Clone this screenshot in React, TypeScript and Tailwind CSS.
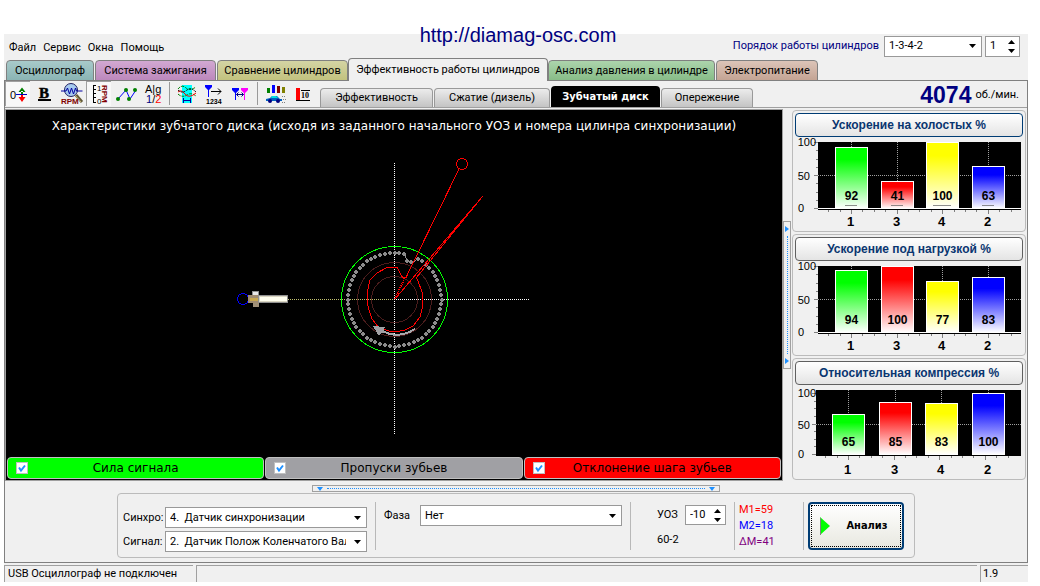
import type { ReactNode } from 'react';

type Bar = { cylinder: number; value: number; left: number };

type ChartProps = {
  title: string;
  bars: Bar[];
  plotLeft: number;
  zeroY: number;
  topY: number;
  active?: boolean;
  marks?: boolean;
  whiteAxis?: boolean;
};

const CENTER = { x: 394.5, y: 299.5 };

const gradients = ['#00ff00', '#ff0000', '#ffff00', '#0000ff'];

const wideBars = [40, 86, 131, 177];

const teeth = Array.from({ length: 60 }, (_, i) => {
  const inner = i === 3 || i === 4;
  const radius = inner ? 41 : 47;
  const angle = (i * 6 * Math.PI) / 180;
  return {
    x: Math.round(CENTER.x + radius * Math.sin(angle)),
    y: Math.round(CENTER.y - radius * Math.cos(angle)),
  };
});

function Caret({ up = false }: { up?: boolean }) {
  return (
    <svg width="7" height="4" viewBox="0 0 7 4" className="block" aria-hidden="true">
      <path d={up ? 'M0 4h7L3.5 0z' : 'M0 0h7L3.5 4z'} fill="#000" />
    </svg>
  );
}

function Combo({ id, value, className }: { id: string; value: string; className: string }) {
  return (
    <div className={`relative h-[21px] ${className}`}>
      <select
        id={id}
        defaultValue={value}
        className="h-full w-full appearance-none overflow-hidden border border-[#999] bg-white pr-5 pl-1 text-black outline-none"
      >
        <option value={value}>{value}</option>
      </select>
      <span className="pointer-events-none absolute inset-y-0 right-1.5 flex items-center">
        <Caret />
      </span>
    </div>
  );
}

function Spinner({ id, label, value, className }: { id: string; label: string; value: string; className: string }) {
  return (
    <div className={`flex items-center border border-[#999] bg-white pr-1 ${className}`}>
      <input id={id} aria-label={label} defaultValue={value} className="w-full min-w-0 flex-1 bg-white pl-1 outline-none" />
      <div className="flex flex-col gap-[5px]">
        <button type="button" aria-label="Больше"><Caret up /></button>
        <button type="button" aria-label="Меньше"><Caret /></button>
      </div>
    </div>
  );
}

function ToolButton({ label, pressed = false, children }: { label: string; pressed?: boolean; children: ReactNode }) {
  return (
    <button
      type="button"
      aria-label={label}
      className={`flex h-[25px] w-[25px] items-center justify-center ${pressed ? 'border-t border-l border-[#a0a0a0] bg-[#f8f8f8]' : ''}`}
    >
      <svg width="24" height="24" viewBox="0 0 24 24" className="shrink-0" fill="none">
        {children}
      </svg>
    </button>
  );
}

function Toolbar() {
  return (
    <div className="flex w-[313px] shrink-0 items-center gap-0.5 self-start">
      <ToolButton label="Ноль" pressed>
        <text x="4" y="17" fontSize="11" fill="#000" fontFamily="Liberation Sans, sans-serif">0</text>
        <path d="M10 12.500h11" stroke="#0000c0" strokeWidth="1" shapeRendering="crispEdges" />
        <path d="M12.500 10h7L16 5.500zM15 9h2v3h-2z" fill="#008000" />
        <path d="M12.500 15h7L16 20zM15 13h2v3h-2z" fill="#ff0000" />
      </ToolButton>
      <ToolButton label="Жирный">
        <text x="6" y="16" fontSize="15" fontWeight="700" fill="#000" stroke="#000" strokeWidth=".5" fontFamily="Liberation Serif, serif">B</text>
        <path d="M5 18h13" stroke="#000" strokeWidth="2" shapeRendering="crispEdges" />
      </ToolButton>
      <ToolButton label="Обороты">
        <path d="M16 13l6 7" stroke="#605838" strokeWidth="3" />
        <path d="M15 13l6 7" stroke="#c8b878" strokeWidth="1" />
        <circle cx="11" cy="8" r="6.500" fill="#a6caf0" stroke="#202060" />
        <path d="M1 9h5l1.500-3 2 6 2-6 2 6 2-6 1 3h6" stroke="#0000a0" />
        <text x="1" y="22" fontSize="8" fontWeight="700" fill="#800000" fontFamily="Liberation Sans, sans-serif">RPM</text>
      </ToolButton>
      <ToolButton label="Шкала оборотов" pressed>
        <path d="M9 3.500H6.500v17H9M6 7.500h3M6 11.500h3M6 15.500h3" stroke="#000" shapeRendering="crispEdges" />
        <text x="10" y="9" fontSize="8" fill="#000" fontFamily="Liberation Sans, sans-serif">1</text>
        <text x="10" y="22" fontSize="8" fill="#000" fontFamily="Liberation Sans, sans-serif">0</text>
        <text x="0" y="0" transform="translate(15 3) rotate(90)" fontSize="8" fontWeight="700" fill="#800000" fontFamily="Liberation Sans, sans-serif">RPM</text>
      </ToolButton>
      <ToolButton label="Точки">
        <path d="M4 17l8-9 4 9 6-9" stroke="#0000ff" />
        <circle cx="4" cy="17" r="2" fill="#008000" />
        <circle cx="12" cy="8" r="2" fill="#008000" />
        <circle cx="15" cy="17" r="2" fill="#008000" />
        <circle cx="21" cy="8" r="2" fill="#008000" />
      </ToolButton>
      <ToolButton label="Алгоритм">
        <text x="4" y="11" fontSize="11" fill="#000" fontFamily="Liberation Sans, sans-serif">A|g</text>
        <text x="5" y="21" fontSize="11" fill="#000080" fontFamily="Liberation Sans, sans-serif">
          1<tspan fill="#000">/</tspan><tspan fill="#ff0000">2</tspan>
        </text>
      </ToolButton>
      <span className="mr-0.5 ml-0.5 h-[23px] w-px bg-[#999]" />
      <ToolButton label="Сечение">
        <path d="M7 3h10v18H7z" fill="#00ffff" />
        <path d="M3 7q4-5 8-1 4 3 10-1M3 12q4 4 9 1 4-3 9 1" stroke="#008000" strokeDasharray="3 1" />
        <path d="M3 10q3-3 7 2 4 5 11-1" stroke="#ff0000" />
        <path d="M3 8q4 4 9 0 4-3 9 2" stroke="#000" strokeDasharray="2 1" />
        <path d="M8.500 16v5M15.500 16v5M9 18.500h7" stroke="#0000a0" />
      </ToolButton>
      <ToolButton label="Порядок">
        <path d="M3 3h7v2L7 8v7H6V8L3 5z" fill="#0000ff" />
        <path d="M9 9.500h10M16 6.500l3 3-3 3" stroke="#000" />
        <text x="4" y="22" fontSize="7" fontWeight="700" fill="#000" fontFamily="Liberation Sans, sans-serif">1234</text>
      </ToolButton>
      <ToolButton label="Интервал">
        <path d="M3 6h7v2L7 11v7H6v-7L3 8z" fill="#0000ff" />
        <path d="M12 6h7v2l-3 3v7h-1v-7l-3-3z" fill="#ff00ff" />
        <path d="M7.500 12.500h7M9.500 10.500l-2 2 2 2M12.500 10.500l2 2-2 2" stroke="#000080" />
      </ToolButton>
      <span className="mr-0.5 ml-0.5 h-[23px] w-px bg-[#999]" />
      <ToolButton label="Автомобиль">
        <path d="M4 6h3v5H4z" fill="#008000" />
        <path d="M9 3h3v8H9z" fill="#0000ff" />
        <path d="M14 4h3v7h-3z" fill="#800000" />
        <path d="M19 5h3v6h-3z" fill="#808000" />
        <path d="M3 19v-2l4-1 2-2h5l3 3h2v2z" fill="#0060c0" />
        <path d="M9 14h4l2 2H8z" fill="#00e0e0" />
        <circle cx="7" cy="19" r="2" fill="#000080" />
        <circle cx="15" cy="19" r="2" fill="#000080" />
        <path d="M19 14.500h3M20 17.500h3M19 20.500h3" stroke="#808080" strokeDasharray="1 1" />
      </ToolButton>
      <ToolButton label="Гистограмма">
        <path d="M6 6h4v12H6z" fill="#ff0000" />
        <path d="M6 18.500h14M11 8.500h9" stroke="#000" shapeRendering="crispEdges" />
        <text x="11" y="16" fontSize="8" fontWeight="700" fill="#000" fontFamily="Liberation Serif, serif">10</text>
      </ToolButton>
    </div>
  );
}

function BarChart({ title, bars, plotLeft, zeroY, topY, active, marks, whiteAxis }: ChartProps) {
  const scale = whiteAxis ? 66 : 61;
  const midY = Math.round(zeroY - scale / 2) + 0.5;
  return (
    <section className="h-[122px] rounded border border-[#bbb] px-0.5 pt-0.5">
      <button
        type="button"
        className={`block h-6 w-full rounded-sm border bg-gradient-to-b from-white to-[#e4e4e4] text-center font-[Liberation_Sans,sans-serif] text-[12px] leading-[22px] font-bold text-[#0a3670] ${active ? 'border-[#003c74]' : 'border-[#606060]'}`}
      >
        {title}
      </button>
      <svg width="228" height="92" viewBox="0 0 228 92" className="block" fontFamily="Liberation Sans, sans-serif">
        <defs>
          {gradients.map((color) => (
            <linearGradient key={color} id={`bar-${color.slice(1)}`} x1="0" y1="0" x2="0" y2="1">
              <stop offset="0" stopColor={color} />
              <stop offset="0.2" stopColor={color} />
              <stop offset="1" stopColor="#fff" />
            </linearGradient>
          ))}
        </defs>
        <g shapeRendering="crispEdges">
          <rect x={plotLeft} y={topY} width={226 - plotLeft} height={zeroY - topY + 2} fill="#000" />
          <path d={`M${plotLeft} ${midY}H226`} stroke="#a0a0a0" strokeDasharray="1 1" />
          {bars.map((bar) => (
            <path key={bar.cylinder} d={`M${bar.left + 16.5} ${topY}V${zeroY}`} stroke="#a0a0a0" strokeDasharray="1 1" />
          ))}
          {whiteAxis && <path d={`M${plotLeft} ${zeroY + 0.5}H226`} stroke="#fff" />}
          {[0, 1, 2, 3, 4, 5, 6, 7, 8].map((i) => {
            const y = Math.round(zeroY - (scale * i) / 8) + 0.5;
            return <path key={i} d={`M${plotLeft - (i % 4 ? 2 : 4)} ${y}H${plotLeft}`} stroke="#808080" />;
          })}
          {Array.from({ length: 17 }, (_, i) => (
            <path
              key={i}
              d={`M${Math.round(bars[0].left + 16 + (i - 2) * 11.4) + 0.5} ${zeroY + 2}v${i % 4 === 2 ? 4 : 2}`}
              stroke="#808080"
            />
          ))}
          {bars.map((bar, i) => {
            const height = Math.round((scale * bar.value) / 100);
            return (
              <rect
                key={bar.cylinder}
                x={bar.left + 0.5}
                y={zeroY - height + 0.5}
                width="32"
                height={height}
                fill={`url(#bar-${gradients[i].slice(1)})`}
                stroke="#fff"
              />
            );
          })}
          {marks && bars.map((bar) => (
            <path key={bar.cylinder} d={`M${bar.left + (bar.value === 100 ? 7 : 10)} ${zeroY - 2.5}h${bar.value === 100 ? 18 : 12}`} stroke="#606060" strokeOpacity=".7" />
          ))}
        </g>
        <g fontSize="11" textAnchor="end">
          <text x="21" y={zeroY - scale + 4}>100</text>
          <text x="15" y={midY + 4}>50</text>
          <text x="9" y={zeroY + 4}>0</text>
        </g>
        <g fontWeight="700" textAnchor="middle">
          {bars.map((bar) => (
            <g key={bar.cylinder}>
              <text x={bar.left + 16.5} y={zeroY - 8} fontSize="12">{bar.value}</text>
              <text x={bar.left + 15.5} y="89" fontSize="13">{bar.cylinder}</text>
            </g>
          ))}
        </g>
      </svg>
    </section>
  );
}

function GearDiagram() {
  return (
    <svg width="320" height="290" viewBox="234 150 320 290" className="mx-auto block" fill="none" shapeRendering="crispEdges">
      <path d="M394.500 163V434M394 299.500H530" stroke="#fff" strokeDasharray="1 1" />
      <path d="M288 299.500H394" stroke="#c0c070" strokeDasharray="1 1" />
      <circle cx="394.500" cy="299.500" r="23" stroke="#4a1c1c" />
      <circle cx="394.500" cy="299.500" r="37" stroke="#4a1c1c" />
      <circle cx="394.500" cy="299.500" r="53" stroke="#00ff00" />
      <path d="M405 254l2 7M413 263l5-5" stroke="#909090" />
      {teeth.map((tooth, i) => (
        <path key={i} d={`M${tooth.x - 1} ${tooth.y - 2}h2v1h1v2h-1v1h-2v-1h-1v-2h1z`} fill="#8c8c8c" />
      ))}
      <path
        d="M405.500 278.500L401.500 276.500 397.500 267.500H387L377 273 370 280 367 293V303L371.500 318 378 327 390 331.500H397L405 330 413 326 420 317 422.500 307V293L416.500 277.500 482.500 196.500 394.500 299.500M405.500 278.500L459 169"
        stroke="#ff0000"
      />
      <path d="M395 299l10-22" stroke="#ff0000" strokeWidth="2" strokeDasharray="1 1" />
      <circle cx="462" cy="164" r="5.500" stroke="#ff0000" />
      <circle cx="243" cy="299" r="5.500" stroke="#0000ff" />
      <path d="M415 329q-18 11-34 1" stroke="#a8a8ac" strokeWidth="2" />
      <path d="M373 326l12 1-1 3 1 3-4 0-2 3z" fill="#a0a0a4" />
      <path d="M252 291h6v4h-6z" fill="#e8e8e8" stroke="#909090" />
      <path d="M253 302h6v5h-6z" fill="#a09078" />
      <path d="M248 295h11v8h-11z" fill="#a08c70" />
      <path d="M250 298h8v3h-8z" fill="#c8a850" />
      <path d="M258 295h30v8h-30z" fill="#909090" />
      <path d="M259 296h28v6h-28z" fill="#d8d4c0" />
      <path d="M260 297h27v4h-27z" fill="#fffff0" />
    </svg>
  );
}

function Toggle({ label, className }: { label: string; className: string }) {
  return (
    <label className={`relative flex h-[22px] flex-1 items-center justify-center rounded border border-[#c0c0c0] ${className}`}>
      <input type="checkbox" defaultChecked className="peer absolute left-2 h-3 w-3 appearance-none border border-[#c0c0c0] bg-white" />
      <svg width="12" height="12" viewBox="0 0 12 12" className="pointer-events-none absolute left-2 hidden peer-checked:block" fill="none">
        <path d="M3 5.500l2 3 4-5" stroke="#1e90ff" strokeWidth="2" />
      </svg>
      {label}
    </label>
  );
}

function Divider() {
  return <span className="h-12 w-px shrink-0 bg-[#b8b8b8]" />;
}

export default function App() {
  return (
    <div className="relative flex min-h-screen flex-col bg-white pt-[34px] pr-3 pb-1 pl-1 font-[Roboto,sans-serif] text-[11px] leading-4 text-black">
      <a href="http://diamag-osc.com" className="absolute top-[23px] left-1/2 z-10 -translate-x-1/2 pr-1 font-[Liberation_Sans,sans-serif] text-[20px] leading-6 text-[#000080]">
        http://diamag-osc.com
      </a>

      <div className="flex flex-1 flex-col bg-[#f0f0f0]">
        {/* Menu */}
        <header className="flex h-6 items-center justify-between pr-2 pl-[5px]">
          <nav className="flex gap-[7px] pt-1">
            <a href="#file">Файл</a>
            <a href="#service">Сервис</a>
            <a href="#windows">Окна</a>
            <a href="#help">Помощь</a>
          </nav>
          <div className="flex items-center gap-[3px]">
            <label htmlFor="order" className="pr-0.5 text-[#000080]">Порядок работы цилиндров</label>
            <Combo id="order" value="1-3-4-2" className="w-[98px]" />
            <Spinner id="cylinder" label="Номер цилиндра" value="1" className="h-[21px] w-[35px]" />
          </div>
        </header>

        {/* Tabs */}
        <div className="z-10 -mb-px flex items-end gap-px pl-0.5">
          <button type="button" className="h-[21px] w-[88px] rounded-t border border-[#808080] bg-gradient-to-b from-[#a8caca] to-[#8ab4b4]">Осциллограф</button>
          <button type="button" className="h-[21px] w-[121px] rounded-t border border-[#808080] bg-gradient-to-b from-[#d2a8d2] to-[#bc88bc]">Система зажигания</button>
          <button type="button" className="h-[21px] w-[131px] rounded-t border border-[#808080] bg-gradient-to-b from-[#d4d4a4] to-[#c2c27e]">Сравнение цилиндров</button>
          <button type="button" className="-ml-px h-[23px] w-[200px] rounded-t border border-b-0 border-[#808080] bg-[#f0f0f0]">Эффективность работы цилиндров</button>
          <button type="button" className="-ml-px h-[21px] w-[167px] rounded-t border border-[#808080] bg-gradient-to-b from-[#acd4ac] to-[#88bc88]">Анализ давления в цилиндре</button>
          <button type="button" className="h-[21px] w-[102px] rounded-t border border-[#808080] bg-gradient-to-b from-[#dcc4b8] to-[#c4a494]">Электропитание</button>
        </div>

        <main className="border border-[#808080]">
          {/* Toolbar */}
          <div className="flex h-[27px] items-end border-b border-[#a0a0a0]">
            <Toolbar />
            <div className="flex flex-1 items-end gap-px pl-0.5">
              <button type="button" className="h-[19px] w-[113px] rounded-t border border-b-0 border-[#999] bg-gradient-to-b from-[#ececec] to-[#c4c4c4]">Эффективность</button>
              <button type="button" className="h-[19px] w-[116px] rounded-t border border-b-0 border-[#999] bg-gradient-to-b from-[#ececec] to-[#c4c4c4]">Сжатие (дизель)</button>
              <button type="button" className="h-[21px] w-[109px] rounded-t bg-black font-[DejaVu_Sans_Condensed,sans-serif] font-bold text-white">Зубчатый диск</button>
              <button type="button" className="h-[19px] w-[92px] rounded-t border border-b-0 border-[#999] bg-gradient-to-b from-[#ececec] to-[#c4c4c4]">Опережение</button>
            </div>
            <p className="flex items-center gap-1 pr-2">
              <strong className="font-[Liberation_Sans,sans-serif] text-[23px] leading-6 text-[#000080]">4074</strong>
              об./мин.
            </p>
          </div>

          <div className="flex pt-px">
            {/* Gear view */}
            <section className="flex flex-1 flex-col border border-[#a0a0a0] bg-black font-[DejaVu_Sans,sans-serif] text-[12px]">
              <h1 className="pt-2 text-center text-white">
                Характеристики зубчатого диска (исходя из заданного начального УОЗ и номера цилинра синхронизации)
              </h1>
              <div className="flex-1 pt-4">
                <GearDiagram />
              </div>
              <div className="mt-auto flex gap-px p-px">
                <Toggle label="Сила сигнала" className="bg-[#00ff00]" />
                <Toggle label="Пропуски зубьев" className="bg-[#a0a0a4]" />
                <Toggle label="Отклонение шага зубьев" className="bg-[#ff0000]" />
              </div>
            </section>

            {/* Side splitter */}
            <div className="flex w-2 shrink-0 items-center">
              <div className="flex h-[148px] w-2 flex-col items-center justify-between border border-[#a0a0a0] py-1">
                <svg width="4" height="6" viewBox="0 0 4 6"><path d="M0 0v6l4-3z" fill="#1e90ff" /></svg>
                <span className="my-1 w-0 flex-1 border-l border-dotted border-[#1e90ff]" />
                <svg width="4" height="6" viewBox="0 0 4 6"><path d="M0 0v6l4-3z" fill="#1e90ff" /></svg>
              </div>
            </div>

            {/* Charts */}
            <aside className="flex w-[236px] shrink-0 flex-col gap-0.5 pt-px pr-px pb-px pl-px">
              <BarChart
                title="Ускорение на холостых %"
                plotLeft={23}
                topY={5}
                zeroY={71}
                active
                marks
                whiteAxis
                bars={[92, 41, 100, 63].map((value, i) => ({ value, cylinder: [1, 3, 4, 2][i], left: wideBars[i] }))}
              />
              <BarChart
                title="Ускорение под нагрузкой %"
                plotLeft={23}
                topY={5}
                zeroY={71}
                whiteAxis
                bars={[94, 100, 77, 83].map((value, i) => ({ value, cylinder: [1, 3, 4, 2][i], left: wideBars[i] }))}
              />
              <BarChart
                title="Относительная компрессия %"
                plotLeft={21}
                topY={5}
                zeroY={69}
                bars={[65, 85, 83, 100].map((value, i) => ({ value, cylinder: [1, 3, 4, 2][i], left: [37, 84, 130, 177][i] }))}
              />
            </aside>
          </div>

          {/* Bottom splitter */}
          <div className="mx-auto mt-1 flex h-[7px] w-2/5 items-center border border-[#a0a0a0] px-1">
            <svg width="6" height="4" viewBox="0 0 6 4"><path d="M0 0h6L3 4z" fill="#1e90ff" /></svg>
            <span className="mx-1 h-0 flex-1 border-t border-dotted border-[#1e90ff]" />
            <svg width="6" height="4" viewBox="0 0 6 4"><path d="M0 0h6L3 4z" fill="#1e90ff" /></svg>
          </div>

          {/* Analysis settings */}
          <form className="mx-auto mt-px mb-1 flex h-[65px] w-max items-center rounded border border-[#bbb] pr-2.5 pl-[5px]">
            <div className="grid grid-cols-[42px_202px] items-center gap-y-[3px] pt-2">
              <label htmlFor="sync">Синхро:</label>
              <Combo id="sync" value={'4.\u00a0 Датчик синхронизации'} className="w-full" />
              <label htmlFor="signal">Сигнал:</label>
              <Combo id="signal" value={'2.\u00a0 Датчик Полож Коленчатого Вала'} className="w-full" />
            </div>
            <span className="w-2" />
            <Divider />
            <div className="flex items-center self-start pt-[11px] pr-2 pl-2">
              <label htmlFor="phase" className="w-9">Фаза</label>
              <Combo id="phase" value="Нет" className="w-[202px]" />
            </div>
            <Divider />
            <div className="w-[103px] self-start pt-[11px] pl-[26px]">
              <div className="flex items-center justify-between pr-2">
                <label htmlFor="angle">УОЗ</label>
                <Spinner id="angle" label="УОЗ" value="-10" className="h-5 w-[41px]" />
              </div>
              <p className="pt-[7px]">60-2</p>
            </div>
            <Divider />
            <div className="w-[68px] pl-1">
              <p className="text-[#ff0000]">M1=59</p>
              <p className="text-[#0000ff]">M2=18</p>
              <p className="text-[#800080]">ΔM=41</p>
            </div>
            <Divider />
            <button type="button" className="ml-1 h-12 w-24 rounded-sm border-2 border-[#003c74] bg-gradient-to-b from-white to-[#e8e8e0] p-px font-[DejaVu_Sans_Condensed,sans-serif] font-bold">
              <span className="flex h-full items-center border border-dotted border-black pl-2">
                <svg width="10" height="18" viewBox="0 0 10 18"><path d="M0 0v18l10-9z" fill="#00ff00" /><path d="M.5 1v17" stroke="#808080" /></svg>
                <span className="flex-1 pl-1 text-center">Анализ</span>
              </span>
            </button>
          </form>
        </main>

        {/* Status bar */}
        <footer className="mt-0.5 flex h-[17px] gap-[3px]">
          <div className="w-[189px] border-t border-l border-[#a0a0a0] pl-[3px]">USB Осциллограф не подключен</div>
          <div className="flex-1 border-t border-l border-[#a0a0a0]" />
          <div className="w-12 border-t border-l border-[#a0a0a0] pl-0.5">1.9</div>
        </footer>
      </div>
    </div>
  );
}
